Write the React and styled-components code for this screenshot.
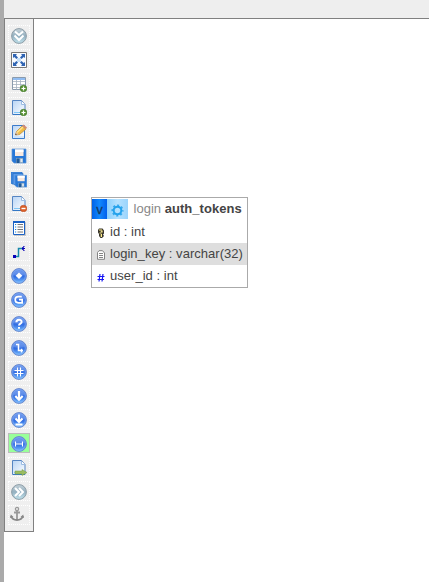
import React from 'react';
import styled, { createGlobalStyle } from 'styled-components';

const GlobalStyle = createGlobalStyle`
  * { box-sizing: border-box; }
  body { margin: 0; background: #fff; font-family: "Liberation Sans", Arial, sans-serif; color: #444; }
  svg { display: block; flex: none; }
`;

const Page = styled.div`
  display: flex;
  height: 582px;
  overflow: hidden;
`;
const Resizer = styled.div`
  flex: none;
  width: 4px;
  background: #aaa;
`;
const Main = styled.main`
  flex: 1;
  display: flex;
  flex-direction: column;
`;
const TopBar = styled.header`
  flex: none;
  height: 19px;
  background: #eee;
  border-bottom: 1px solid #808080;
`;
const Workspace = styled.div`
  flex: 1;
  display: flex;
  align-items: flex-start;
`;
const Toolbar = styled.nav`
  flex: none;
  display: flex;
  flex-direction: column;
  gap: 4px;
  width: 30px;
  height: 513px;
  padding: 6px 3px 0;
  background: #efefef;
  border: 1px solid #808080;
  border-top: 0;
`;
const ToolButton = styled.a`
  flex: none;
  height: 20px;
  width: 22px;
  padding: ${(p) => (p.$shift ? '0' : '2px 0 0 2px')};
  border: 1px ${(p) => (p.$active ? 'solid #bbb' : 'dotted #fff')};
  background: ${(p) => (p.$active ? '#99ff99' : 'transparent')};
`;
const Canvas = styled.section`
  flex: 1;
  padding: 178px 0 0 57px;
`;
const TableBox = styled.div`
  width: 157px;
  border: 1px solid #aaa;
  background: #fff;
  font-size: 13px;
  letter-spacing: 0.03px;
`;
const TableHead = styled.div`
  display: flex;
  align-items: flex-start;
  height: 23px;
  padding-top: 1px;
`;
const Toggle = styled.div`
  display: flex;
  align-items: center;
  justify-content: center;
  width: 15px;
  height: 20px;
  padding-top: 1px;
  background: linear-gradient(90deg, #0062e8, #1188fc 50%, #0060ed);
  color: #173962;
  -webkit-text-stroke: 0.3px #173962;
`;
const Settings = styled.div`
  width: 21px;
  height: 20px;
  padding: 5px 0 0 4px;
  background: linear-gradient(90deg, #8acffc, #b5e1ff 50%, #9bd4fc);
`;
const Title = styled.div`
  padding: 2px 0 0 5.5px;
  line-height: 15px;
  color: #888;
  white-space: nowrap;
  b { color: #444; }
`;
const Column = styled.div`
  display: flex;
  align-items: center;
  height: 22px;
  padding: 0 0 2px 4px;
  gap: 4px;
  white-space: nowrap;
  background: ${(p) => (p.$shaded ? '#dedede' : '#fff')};
  svg { margin-top: 4px; }
`;

const Icon = ({ children, size = 16 }) => (
  <svg width={size} height={size} viewBox={`0 0 ${size} ${size}`} fill="none">{children}</svg>
);

const Round = ({ gray, children }) => (
  <Icon>
    <circle cx="8" cy="8" r="7.4" fill={gray ? 'url(#grayBall)' : 'url(#blueBall)'} stroke={gray ? '#8d9da7' : '#6a88cc'} />
    {!gray && <circle cx="8" cy="8" r="6.3" stroke="#8db9fb" strokeOpacity=".6" />}
    {!gray && <path d="M2.3 6.5a6 5 0 0 1 11.4 0Q8 9 2.3 6.5" fill="#fff" fillOpacity=".14" />}
    <g stroke="#fff" strokeWidth="2">{children}</g>
  </Icon>
);

const Defs = () => (
  <svg width="0" height="0">
    <defs>
      <linearGradient id="blueBall" x1="0" y1="0" x2="0" y2="1">
        <stop offset="0" stopColor="#6b96ec" />
        <stop offset=".55" stopColor="#316de3" />
        <stop offset="1" stopColor="#79c2ff" />
      </linearGradient>
      <linearGradient id="grayBall" x1="0" y1="0" x2="0" y2="1">
        <stop offset="0" stopColor="#c6d2d9" />
        <stop offset=".5" stopColor="#94b0c0" />
        <stop offset="1" stopColor="#c2e4ee" />
      </linearGradient>
      <linearGradient id="sheet" x1="0" y1="0" x2="1" y2="1">
        <stop offset="0" stopColor="#b8d4f5" />
        <stop offset="1" stopColor="#fff" />
      </linearGradient>
    </defs>
  </svg>
);

const Plus = () => (
  <>
    <circle cx="12.5" cy="12.5" r="3.3" fill="#5c9437" stroke="#397421" strokeWidth=".6" />
    <path d="M12.5 10.5v4M10.5 12.5h4" stroke="#fff" strokeWidth="1.2" />
  </>
);
const Sheet = () => (
  <>
    <path d="M1.5 .5h9l3.5 4V14.5H1.5z" fill="url(#sheet)" stroke="#5685c2" />
    <path d="M10.5 1v3.5H14" fill="#fff" stroke="#9bbce3" />
    <path d="M3 12.5h10" stroke="#80c7f6" />
    <path d="M2 14.5H14" stroke="#3478c5" />
  </>
);
const Disk = () => (
  <>
    <path d="M1 1h14v14H3l-2-2z" fill="#2878d8" stroke="#5d96d8" strokeWidth=".7" />
    <path d="M4 1.5h8.5V8H4z" fill="#f8e9e0" />
    <path d="M4 1.5h8.5V4H4z" fill="#fff" />
    <path d="M5 10h7v5H5z" fill="#8facc5" />
    <path d="M5.5 10.5h3V15h-3z" fill="#205b9b" />
    <path d="M9.5 11h2v3h-2z" fill="#e5ebf0" />
  </>
);

const tools = [
  <Round gray><path d="M4 3.5 8 7l4-3.5M3.5 7.5 8 12l4.5-4.5" /></Round>,
  <Icon>
    <path d="M.5.5h15v15H.5z" fill="#f8fbff" stroke="#777" />
    <path d="M2 2h4L4.9 3.3 7 5.4 5.4 7 3.3 4.9 2 6zM14 2h-4l1.1 1.3L9 5.4 10.6 7l2.1-2.1L14 6zM2 14h4l-1.1-1.3L7 10.6 5.4 9l-2.1 2.1L2 10zM14 14h-4l1.1-1.3L9 10.6 10.6 9l2.1 2.1L14 10z" fill="#2f64b3" />
    <path d="M6 6h4v4H6z" fill="#c5dff8" />
  </Icon>,
  <Icon>
    <path d="M1.5 1.5h13v12h-13z" fill="#fff" stroke="#8a9bad" />
    <path d="M2 2h12v2H2z" fill="#91bdf2" />
    <path d="M2 5.5h12M2 8.5h12M2 11.5h12M5.5 4v9.5M9.5 4v9.5" stroke="#a6b3bf" strokeWidth=".8" />
    <Plus />
  </Icon>,
  <Icon><Sheet /><Plus /></Icon>,
  <Icon>
    <path d="M1.5 1.5h12v13h-12z" fill="url(#sheet)" stroke="#3b7bcb" />
    <path d="M3 13h10" stroke="#b4d8ff" />
    <path d="m4.5 11 1-3.5L11 2l4 3-6.5 5.5z" fill="#f1bb45" stroke="#b68637" strokeWidth=".7" />
    <path d="m6 8.5 6-5.5" stroke="#ffe48d" strokeWidth="1.5" />
    <path d="m4 11 1.3-3L8 10.3z" fill="#e4c19b" />
    <path d="m4 11 .7-1.5L6 10.6z" fill="#444" />
    <path d="m11 2 1.5-1.5L16 3.5 15 5z" fill="#d78c71" />
  </Icon>,
  <Icon><Disk /></Icon>,
  <Icon>
    <path d="M0 0h11v12H1l-1-1z" fill="#478ce0" stroke="#246ec4" strokeWidth=".7" />
    <path d="M2 1.5h10v11H3l-1-1z" fill="#5d9cec" stroke="#246ec4" strokeWidth=".7" />
    <g transform="translate(3.2 2.5) scale(.84)"><Disk /></g>
  </Icon>,
  <Icon>
    <Sheet />
    <circle cx="12.5" cy="12.5" r="3.3" fill="#dd6027" stroke="#b84c22" strokeWidth=".6" />
    <path d="M10.5 12.5h4" stroke="#fff" strokeWidth="1.4" />
  </Icon>,
  <Icon>
    <path d="M3 2h12v14H3z" fill="#c8c8c8" />
    <path d="M2.5 1.5h11v13h-11z" fill="#fff" stroke="#1c62c5" />
    <path d="M2 1h12v2H2z" fill="#1c62c5" />
    <path d="M4 4.5h1.2M4 7h1.2M4 9.5h1.2M4 12h1.2" stroke="#1683d4" />
    <path d="M6.5 4.5H12M6.5 7H12M6.5 9.5H12M6.5 12H12" stroke="#777" />
  </Icon>,
  <Icon>
    <path d="M4 12.5h3.5v-8H12" stroke="#1688aa" strokeWidth="1.5" />
    <path d="M2 11h3v3H2z" fill="#0800b8" />
    <path d="M13.5 2.5h-1v1h-1v2h1v1h1M11 4.5h3" stroke="#0800b8" />
  </Icon>,
  <Round><path d="m8 4.5 3.3 3.3L8 11.1 4.7 7.8z" fill="#fff" stroke="none" /></Round>,
  <Round><path d="M10.8 4.7H7.3C5.2 4.7 4.2 6 4.2 7.8c0 2 1.3 3 3.1 3h3.9V7.7H8" strokeWidth="1.7" /></Round>,
  <Round><path d="M5.4 6.3c0-3.4 5.2-3.2 5.2-.4C10.6 7.7 8 7.5 8 9.6M8 11v1.7" /></Round>,
  <Round><path d="M5 4.5h2.5v6H12M10.5 8.7v3.8" strokeWidth="1.5" /></Round>,
  <Round><path d="M6.5 3.5v9M9.5 3.5v9M3.5 6.5h9M3.5 9.5h9" strokeWidth="1.1" /></Round>,
  <Round><path d="M8 3v9M4.3 8 8 11.7 11.7 8" strokeWidth="2.2" /></Round>,
  <Round><path d="M8 2.5v8M4.5 6.5 8 10l3.5-3.5M4.5 12.5h7" strokeWidth="2" /></Round>,
  <Round><path d="M4.5 5.5v5M11.5 5.5v5M4 8h8" strokeWidth="1.1" /></Round>,
  <Icon>
    <Sheet />
    <path d="M4 11h7V9.5l5 3-5 3V14H4z" fill="#9bbd61" stroke="#769846" strokeWidth=".5" />
  </Icon>,
  <Round gray><path d="M4 4l4 4-4 4M8 4l4 4-4 4" /></Round>,
  <Icon>
    <circle cx="8" cy="3" r="1.6" stroke="#999" strokeWidth="1.3" />
    <path d="M8 4.5V14M5 6.5h6" stroke="#999" strokeWidth="1.8" />
    <path d="M2 10c1 3 3 4 6 4s5-1 6-4" stroke="#888" strokeWidth="1.9" />
    <path d="m1 12 .8-3.5L4.5 11zM15 12l-.8-3.5-2.7 2.5z" fill="#888" />
  </Icon>,
];

const Gear = () => (
  <svg width="13" height="13" viewBox="0 0 13 13" fill="none">
    <circle cx="6.5" cy="6.5" r="5.2" stroke="#35a8ed" strokeWidth="1.8" strokeDasharray="2.04 2.04" strokeDashoffset="1" />
    <circle cx="6.5" cy="6.5" r="3.8" stroke="#24a2ec" strokeWidth="2" />
  </svg>
);
const KeyIcon = () => (
  <Icon size={10}>
    <path d="M3 .5h3.5l1.5 2v3L7 6.5 8 8 6 10H4.5L3 8V6L2 4.5V2z" fill="#37342b" />
    <path d="M3 1.5h3v1H3zM3.5 4.5h2v1h-2zM4.7 6h1.3v3H4.7z" fill="#ffed8a" />
    <path d="M4.7 2.5h2v2h-2z" fill="#e5d68b" />
  </Icon>
);
const TextIcon = () => (
  <Icon size={10}>
    <path d="M3 .7h3.5L8.5 3v6.3H1.5V2.5z" fill="#fff" stroke="#777" strokeWidth=".9" />
    <path d="M3 3.5h4M3 5.5h4M3 7.5h4" stroke="#777" strokeWidth=".9" />
  </Icon>
);
const NumberIcon = () => (
  <Icon size={10}>
    <path d="M4 2 3 9.5M7 2 6 9.5M1.5 4.5h7M1.5 7.5H8" stroke="#1515f5" strokeWidth="1.2" />
  </Icon>
);

export default function App() {
  return (
    <>
      <GlobalStyle />
      <Page>
        <Resizer />
        <Main>
          <TopBar />
          <Workspace>
            <Toolbar>
              {tools.map((icon, i) => (
                <ToolButton key={i} $active={i === 17} $shift={i === 20}>{icon}</ToolButton>
              ))}
            </Toolbar>
            <Canvas>
              <TableBox>
                <TableHead>
                  <Toggle>v</Toggle>
                  <Settings><Gear /></Settings>
                  <Title>login <b>auth_tokens</b></Title>
                </TableHead>
                <Column><KeyIcon />id : int</Column>
                <Column $shaded><TextIcon />login_key : varchar(32)</Column>
                <Column><NumberIcon />user_id : int</Column>
              </TableBox>
            </Canvas>
          </Workspace>
        </Main>
      </Page>
      <Defs />
    </>
  );
}
